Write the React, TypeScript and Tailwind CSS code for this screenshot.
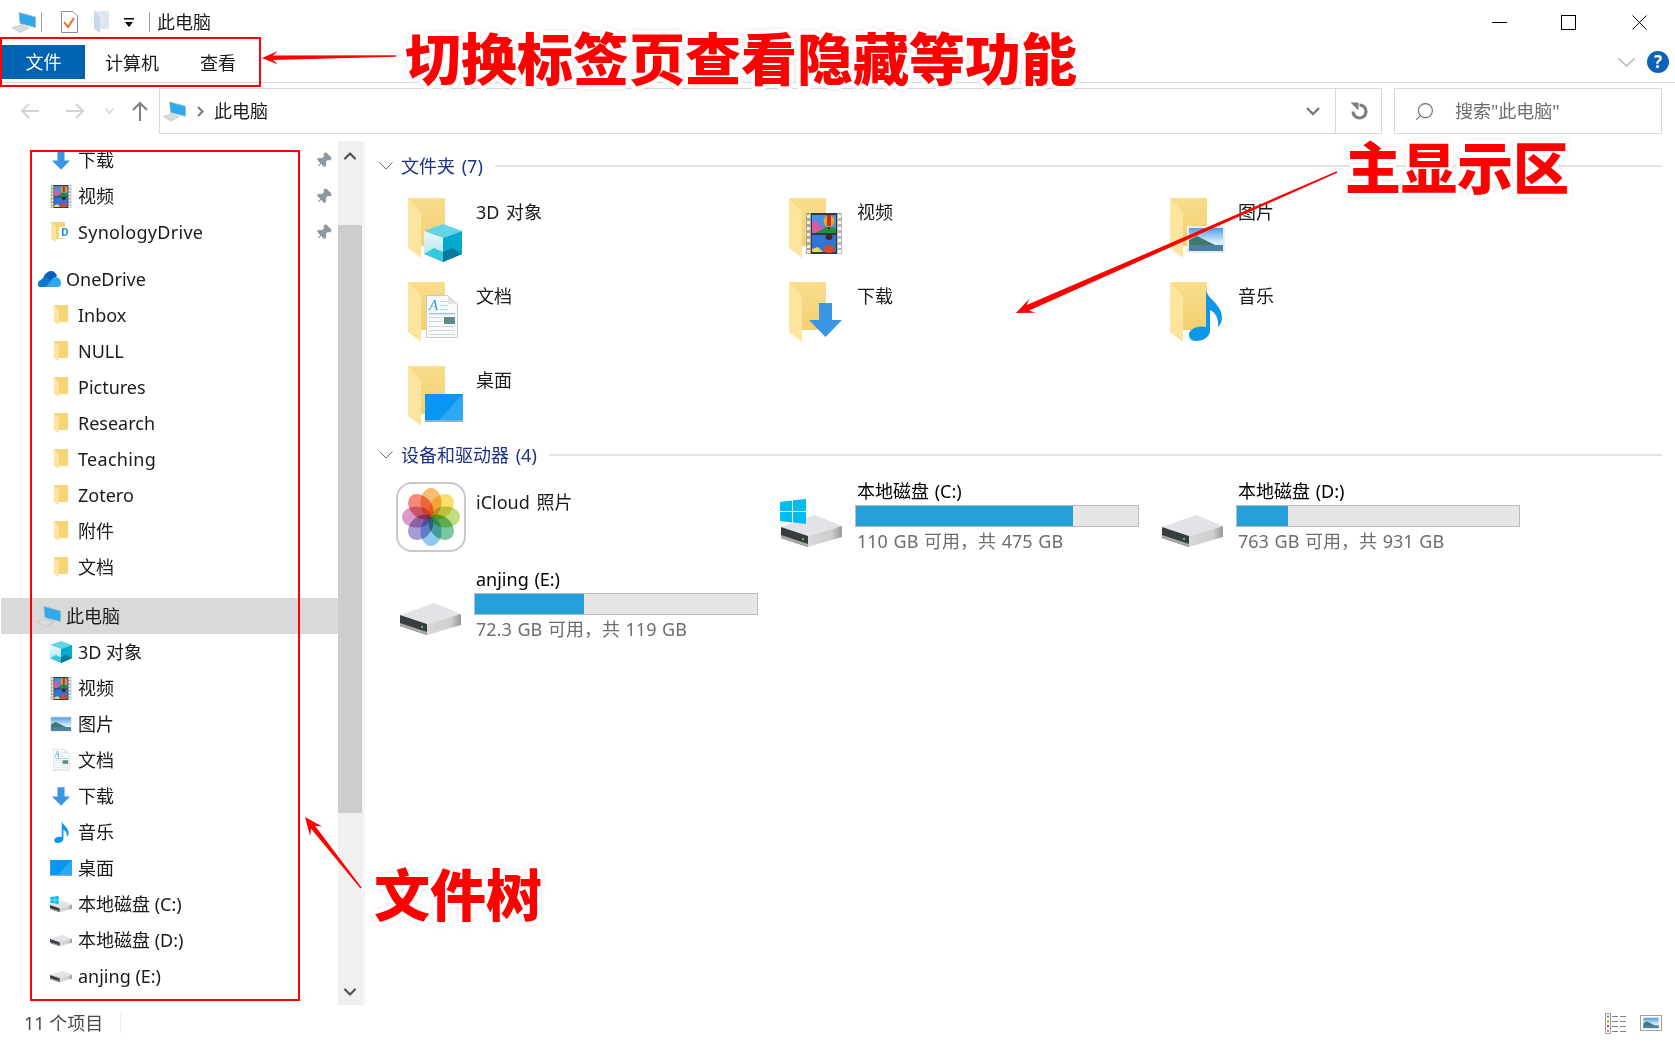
import React, { useId } from 'react';
import { ChevronDown, ChevronUp, Pin, Search } from 'lucide-react';

/* ---------- small drawn icons ---------- */

const Cube = ({ w = 38, h = 38 }: { w?: number; h?: number }) => {
  const id = useId();
  return (
    <svg width={w} height={h} viewBox="0 0 38 38">
      <defs>
        <linearGradient id={id} x1="0" y1="0" x2="0" y2="1">
          <stop offset="0" stopColor="#eaf8fa" />
          <stop offset="1" stopColor="#a9e3ea" />
        </linearGradient>
      </defs>
      <polygon points="19,0 38,7 19,14 0,7" fill="#62d4e6" />
      <polygon points="0,7 19,14 19,38 0,30" fill={`url(#${id})`} />
      <polygon points="38,7 19,14 19,38 38,30" fill="#04a9cf" />
      <polygon points="0,30 10,24 19,28 19,38" fill="#35c9d9" />
      <polygon points="38,30 28,24 19,28 19,38" fill="#03789c" />
    </svg>
  );
};

const Film = ({ w = 36, h = 41 }: { w?: number; h?: number }) => (
  <svg width={w} height={h} viewBox="0 0 36 41">
    <rect width="36" height="41" fill="#34393e" />
    <rect x="0" width="5" height="41" fill="#a9a998" />
    <rect x="31" width="5" height="41" fill="#b9b9b9" />
    {[2, 8, 14, 20, 26, 32, 37].map((y) => (
      <g key={y}>
        <rect x="1" y={y} width="3" height="3" fill="#f4f0d0" />
        <rect x="32" y={y} width="3" height="3" fill="#fff" />
      </g>
    ))}
    <rect x="6" y="2" width="24" height="18" fill="#4a90e2" />
    <polygon points="6,18 6,10 10,7 13,12 17,14 21,18 6,20" fill="#d85aa8" />
    <polygon points="10,20 20,14 30,15 30,20" fill="#1f8f3c" />
    <ellipse cx="23" cy="8" rx="5.5" ry="6" fill="#e8a820" />
    <rect x="21" y="2" width="4" height="11" fill="#c92a2a" />
    <rect x="22" y="14" width="2" height="2" fill="#3c2a20" />
    <rect x="6" y="22" width="24" height="17" fill="#2f74d8" />
    <polygon points="6,39 6,36 12,34 17,39" fill="#e7d55a" />
    <ellipse cx="23" cy="36" rx="5.5" ry="4" fill="#dd4a22" />
    <ellipse cx="23" cy="24" rx="3.5" ry="3" fill="#3c2a20" />
  </svg>
);

const Picture = ({ w = 38, h = 27 }: { w?: number; h?: number }) => {
  const id = useId();
  return (
    <svg width={w} height={h} viewBox="0 0 38 27">
      <defs>
        <linearGradient id={id} x1="0" y1="0" x2="0" y2="1">
          <stop offset="0" stopColor="#4e9de6" />
          <stop offset="0.6" stopColor="#d5ecf8" />
        </linearGradient>
      </defs>
      <rect width="38" height="27" fill="#e9ecec" />
      <rect x="2" y="2" width="34" height="23" fill={`url(#${id})`} />
      <polygon points="2,14 10,10 18,14 28,19 36,20 36,25 2,25" fill="#3f7a6a" />
      <rect x="2" y="19" width="34" height="6" fill="#4f80a8" />
    </svg>
  );
};

const Doc = ({ w = 32, h = 43 }: { w?: number; h?: number }) => (
  <svg width={w} height={h} viewBox="0 0 32 43">
    <polygon points="0.5,0.5 22,0.5 31.5,9 31.5,42.5 0.5,42.5" fill="#f7fafb" stroke="#c9c9c9" />
    <polygon points="22,0.5 22,9 31.5,9" fill="#dfe3e6" />
    <text x="3" y="15" fontSize="15" fontStyle="italic" fill="#3b9ae0" fontFamily="Liberation Serif, serif">A</text>
    {[6, 10, 14].map((y) => (
      <rect key={y} x="14" y={y} width="8" height="1" fill="#b7d8ef" />
    ))}
    <rect x="3" y="18" width="26" height="1.5" fill="#9cc8ea" />
    <rect x="18" y="22" width="11" height="7" fill="#5f8a88" />
    {[22, 26, 31, 35, 39].map((y, i) => (
      <rect key={y} x="3" y={y} width={i < 2 ? 13 : 26} height="1" fill="#cfd6da" />
    ))}
  </svg>
);

const DownArrow = ({ w = 33, h = 34 }: { w?: number; h?: number }) => (
  <svg width={w} height={h} viewBox="0 0 33 34">
    <polygon points="10,0 23,0 23,17 33,17 16.5,34 0,17 10,17" fill="#3a96e4" />
  </svg>
);

const Note = ({ w = 33, h = 51 }: { w?: number; h?: number }) => (
  <svg width={w} height={h} viewBox="0 0 33 51">
    <path
      d="M17 0 C19 10 33 14 33 28 C33 32 31 35 29 37 C30 28 26 22 21 20 L21 41 C21 47 14 51 7 51 C2 51 0 48 0 45 C0 39 8 35 17 37 Z"
      fill="#0d97ea"
    />
  </svg>
);

const Desktop = ({ w = 38, h = 28 }: { w?: number; h?: number }) => (
  <svg width={w} height={h} viewBox="0 0 38 28">
    <rect width="38" height="28" fill="#0796f2" />
    <polygon points="38,0 38,26 14,26" fill="#2ba8f8" />
    <rect y="26" width="38" height="2" fill="#8fb1c6" />
  </svg>
);

const BigFolder = ({ children }: { children?: React.ReactNode }) => {
  const id = useId();
  return (
    <div className="relative w-[60px] h-[62px]">
      <svg width="37" height="60" viewBox="0 0 37 60">
        <defs>
          <linearGradient id={id} x1="0" y1="0" x2="0" y2="1">
            <stop offset="0" stopColor="#f9dd8c" />
            <stop offset="1" stopColor="#f3cf70" />
          </linearGradient>
        </defs>
        <polygon points="0,0 37,0 37,48 13,48" fill={`url(#${id})`} />
        <polygon points="0,0 13,14 13,60 0,50" fill="#fde59e" />
      </svg>
      {children}
    </div>
  );
};

const SmallFolder = () => (
  <svg width="14" height="20" viewBox="0 0 14 20">
    <polygon points="0,0 14,0 14,17 5,17" fill="#f6d577" />
    <polygon points="0,0 5,5 5,20 0,17" fill="#fde59e" />
  </svg>
);

const PcIcon = ({ w = 24, h = 21 }: { w?: number; h?: number }) => (
  <svg width={w} height={h} viewBox="0 0 24 21">
    <polygon points="7,0.5 23.5,5 23.5,15.5 8,11.5" fill="#2fa9ee" stroke="#9fb5c2" strokeWidth="0.8" />
    <polygon points="0,15.5 9,13 17,16 8,20.5" fill="#d7dcdf" stroke="#b5b9bc" strokeWidth="0.6" />
  </svg>
);

const Drive = ({ w = 61, h = 32 }: { w?: number; h?: number }) => {
  const id = useId();
  return (
    <svg width={w} height={h} viewBox="0 0 61 32">
      <defs>
        <linearGradient id={id} x1="0" y1="0" x2="1" y2="0">
          <stop offset="0" stopColor="#d8d9db" />
          <stop offset="0.7" stopColor="#cfcfcf" />
          <stop offset="1" stopColor="#989898" />
        </linearGradient>
      </defs>
      <polygon points="0,12 34,0 61,11 27,21" fill="#e2e3e7" />
      <polygon points="27,21 61,11 61,22 27,32" fill={`url(#${id})`} />
      <polygon points="0,12 27,21 27,32 0,23" fill="#3a3d40" />
      <polygon points="0,20 27,29 27,32 0,23" fill="#a9a9a9" />
      <rect x="21" y="23" width="2" height="2" fill="#2fd24a" />
    </svg>
  );
};

const WinFlag = ({ w = 26, h = 25 }: { w?: number; h?: number }) => (
  <svg width={w} height={h} viewBox="0 0 26 25">
    <polygon points="0,3 12,1.4 12,12 0,12" fill="#00bcf2" />
    <polygon points="13,1.2 26,0 26,12 13,12" fill="#00bcf2" />
    <polygon points="0,13 12,13 12,23.4 0,22" fill="#00bcf2" />
    <polygon points="13,13 26,13 26,25 13,23.6" fill="#00bcf2" />
  </svg>
);

const OneDriveCloud = () => (
  <svg width="24" height="16" viewBox="0 0 24 16">
    <path d="M6 8 C7 3 11 0 14 0 C17 0 19 2 20 5 L12 12 Z" fill="#0a5fb4" />
    <path d="M3 16 C0 16 0 10 4 9 C6 6 10 6 12 8 L18 16 Z" fill="#0b78d4" />
    <path d="M9 16 L15 8 C17 5 24 6 24 12 C24 15 22 16 21 16 Z" fill="#2ea6ea" />
  </svg>
);

const Photos = () => {
  const petals = ['#f8a23c', '#f6d336', '#abd04f', '#46b37a', '#64b3ea', '#8578c6', '#c873b6', '#ef5a48'];
  return (
    <div className="w-[70px] h-[70px] rounded-[16px] border-2 border-[#c9c9c9] bg-white flex items-center justify-center">
      <svg width="60" height="60" viewBox="0 0 60 60">
        {petals.map((c, i) => (
          <ellipse
            key={c}
            cx="30"
            cy="15.5"
            rx="10.5"
            ry="14.5"
            fill={c}
            fillOpacity="0.72"
            transform={`rotate(${i * 45} 30 30)`}
            className="mix-blend-multiply"
          />
        ))}
      </svg>
    </div>
  );
};

/* ---------- data ---------- */

type NavRow = { label: string; icon: React.ReactNode; root?: boolean; pin?: boolean; gap?: string; active?: boolean; track?: boolean };

const smallDrive = <Drive w={22} h={13} />;

const navRows: NavRow[] = [
  { label: '下载', icon: <DownArrow w={18} h={19} />, pin: true },
  { label: '视频', icon: <Film w={22} h={23} />, pin: true },
  {
    label: 'SynologyDrive',
    pin: true,
    track: true,
    icon: (
      <div className="relative w-[20px] h-[20px]">
        <SmallFolder />
        <div className="absolute right-0 top-[5px] w-[12px] h-[11px] bg-white text-[10px] leading-[11px] text-center font-bold text-[#1d8fd8]">D</div>
      </div>
    ),
  },
  { label: 'OneDrive', icon: <OneDriveCloud />, root: true, gap: 'mt-[11px]' },
  { label: 'Inbox', icon: <SmallFolder /> },
  { label: 'NULL', icon: <SmallFolder /> },
  { label: 'Pictures', icon: <SmallFolder /> },
  { label: 'Research', icon: <SmallFolder /> },
  { label: 'Teaching', icon: <SmallFolder />, track: true },
  { label: 'Zotero', icon: <SmallFolder /> },
  { label: '附件', icon: <SmallFolder /> },
  { label: '文档', icon: <SmallFolder /> },
  { label: '此电脑', icon: <PcIcon />, root: true, gap: 'mt-[13px]', active: true },
  { label: '3D 对象', icon: <Cube w={22} h={22} /> },
  { label: '视频', icon: <Film w={22} h={23} /> },
  { label: '图片', icon: <Picture w={22} h={16} /> },
  { label: '文档', icon: <Doc w={17} h={22} /> },
  { label: '下载', icon: <DownArrow w={18} h={19} /> },
  { label: '音乐', icon: <Note w={17} h={22} /> },
  { label: '桌面', icon: <Desktop w={22} h={16} /> },
  {
    label: '本地磁盘 (C:)',
    icon: (
      <div className="relative w-[22px] h-[17px]">
        <div className="absolute bottom-0 left-0">{smallDrive}</div>
        <div className="absolute top-0 left-0">
          <WinFlag w={9} h={8} />
        </div>
      </div>
    ),
  },
  { label: '本地磁盘 (D:)', icon: smallDrive },
  { label: 'anjing (E:)', icon: smallDrive },
];

const folders: { label: string; overlay: React.ReactNode; left: string; top: string }[] = [
  { label: '3D 对象', overlay: <Cube />, left: 'left-[16px]', top: 'top-[26px]' },
  { label: '视频', overlay: <Film />, left: 'left-[17px]', top: 'top-[15px]' },
  { label: '图片', overlay: <Picture />, left: 'left-[17px]', top: 'top-[28px]' },
  { label: '文档', overlay: <Doc />, left: 'left-[18px]', top: 'top-[13px]' },
  { label: '下载', overlay: <DownArrow />, left: 'left-[20px]', top: 'top-[21px]' },
  { label: '音乐', overlay: <Note />, left: 'left-[19px]', top: 'top-[8px]' },
  { label: '桌面', overlay: <Desktop />, left: 'left-[17px]', top: 'top-[28px]' },
];

/* ---------- pieces ---------- */

const DriveTile = ({ name, free, pct, win }: { name: string; free: string; pct: string; win?: boolean }) => (
  <div className="h-[88px] flex">
    <div className="relative w-[79px] shrink-0">
      <div className="absolute left-[5px] top-[45px]">
        <Drive />
      </div>
      {win && (
        <div className="absolute left-[4px] top-[29px]">
          <WinFlag />
        </div>
      )}
    </div>
    <div className="w-[284px] pt-[8px]">
      <div className="h-[26px] leading-[26px] pl-[2px] text-black [word-spacing:1px]">{name}</div>
      <div className="mt-[1px] h-[22px] border border-[#bcbcbc] bg-[#e6e6e6]">
        <div className={`h-full bg-[#26a0da] ${pct}`} />
      </div>
      <div className="h-[26px] leading-[26px] mt-[1px] pl-[2px] text-[#6d6d6d] [word-spacing:1px]">{free}</div>
    </div>
  </div>
);

const SectionHeader = ({ label }: { label: string }) => (
  <div className="h-[28px] flex items-center">
    <svg width="14" height="8" viewBox="0 0 14 8" className="ml-[14px] shrink-0">
      <polyline points="0.5,0.5 7,7 13.5,0.5" fill="none" stroke="#6d6d6d" />
    </svg>
    <span className="ml-[8px] text-[#1e3287] whitespace-nowrap [word-spacing:2px]">{label}</span>
    <div className="ml-[12px] flex-1 h-[2px] bg-[#e5e5e5] mr-[13px]" />
  </div>
);

const RedArrow = ({ x1, y1, x2, y2, w = 5, head = 14 }: { x1: number; y1: number; x2: number; y2: number; w?: number; head?: number }) => {
  // tapered line from tail (x1,y1) to tip (x2,y2) with a swept head
  const len = Math.hypot(x2 - x1, y2 - y1);
  const ux = (x2 - x1) / len;
  const uy = (y2 - y1) / len;
  const nx = -uy;
  const ny = ux;
  const p = (along: number, side: number) => `${x1 + ux * along + nx * side},${y1 + uy * along + ny * side}`;
  const points = [
    p(0, 0.7),
    p(len - head + 3, w / 2),
    p(len - head - 2, head * 0.48),
    p(len, 0),
    p(len - head - 2, -head * 0.48),
    p(len - head + 3, -w / 2),
    p(0, -0.7),
  ].join(' ');
  return <polygon points={points} fill="#ff0000" />;
};

const bigText =
  "absolute font-black text-[56px] leading-[64px] text-[#ff0000] whitespace-nowrap [font-family:'Noto_Sans_CJK_SC',sans-serif] [text-shadow:4px_0_0_#fff,-4px_0_0_#fff,0_4px_0_#fff,0_-4px_0_#fff,3px_3px_0_#fff,-3px_3px_0_#fff,3px_-3px_0_#fff,-3px_-3px_0_#fff,0_0_7px_#8a8a8a]";

export default function App() {
  return (
    <div className="relative w-[1675px] h-[1041px] overflow-hidden bg-white text-[18px] text-[#1a1a1a] [font-family:'Noto_Sans','Noto_Sans_CJK_SC',sans-serif]">
      {/* title bar */}
      <div className="h-[38px] pt-[6px] flex items-center relative">
        <div className="ml-[12px]">
          <PcIcon w={24} h={21} />
        </div>
        <div className="ml-[5px] w-px h-[20px] bg-[#a0a0a0]" />
        <svg width="17" height="22" viewBox="0 0 17 22" className="ml-[19px]">
          <polygon points="0.5,0.5 12,0.5 16.5,5 16.5,21.5 0.5,21.5" fill="#fff" stroke="#8e8e8e" />
          <polyline points="3,11 7,16 13,7" fill="none" stroke="#ec6a25" strokeWidth="2" />
        </svg>
        <svg width="15" height="22" viewBox="0 0 15 22" className="ml-[16px]">
          <polygon points="0,0 15,0 15,18 6,18" fill="#dce7f3" />
          <polygon points="0,0 6,6 6,22 0,18" fill="#c9d9ec" />
        </svg>
        <svg width="10" height="9" viewBox="0 0 10 9" className="ml-[15px]">
          <rect width="10" height="1.5" fill="#000" />
          <polygon points="1,4 9,4 5,9" fill="#000" />
        </svg>
        <div className="ml-[15px] w-px h-[20px] bg-[#a0a0a0]" />
        <span className="ml-[7px]">此电脑</span>
        <div className="ml-auto flex items-center">
          <svg width="15" height="15" viewBox="0 0 15 15" className="mr-[54px]">
            <line x1="0" y1="7.5" x2="15" y2="7.5" stroke="#000" />
          </svg>
          <svg width="15" height="15" viewBox="0 0 15 15" className="mr-[56px]">
            <rect x="0.5" y="0.5" width="14" height="14" fill="none" stroke="#000" />
          </svg>
          <svg width="15" height="15" viewBox="0 0 15 15" className="mr-[28px]">
            <path d="M0.5 0.5 L14.5 14.5 M14.5 0.5 L0.5 14.5" stroke="#000" />
          </svg>
        </div>
      </div>

      {/* ribbon tabs */}
      <div className="h-[45px] border-b border-[#dcdcdc] flex items-start pt-[7px]">
        <div className="ml-[2px] w-[83px] h-[34px] bg-[#0063b1] text-white flex items-center justify-center">文件</div>
        <div className="ml-[20px] h-[34px] leading-[34px] pt-px">计算机</div>
        <div className="ml-[41px] h-[34px] leading-[34px] pt-px">查看</div>
        <div className="ml-auto flex items-center h-[34px] pr-[6px]">
          <svg width="17" height="9" viewBox="0 0 17 9" className="mr-[12px]">
            <polyline points="0.5,0.5 8.5,8 16.5,0.5" fill="none" stroke="#b4b4b4" strokeWidth="1.5" />
          </svg>
          <div className="w-[22px] h-[22px] rounded-full bg-[#0b62b8] text-white text-[17px] leading-[22px] font-bold text-center">?</div>
        </div>
      </div>

      {/* address row */}
      <div className="h-[58px] pt-[5px] flex items-start">
        <div className="w-[159px] h-[45px] flex items-center relative shrink-0">
          <svg width="19" height="16" viewBox="0 0 19 16" className="ml-[20px]">
            <path d="M19 8 H2 M9 1 L2 8 L9 15" fill="none" stroke="#d4d4d4" strokeWidth="2" />
          </svg>
          <svg width="19" height="16" viewBox="0 0 19 16" className="ml-[27px]">
            <path d="M0 8 H17 M10 1 L17 8 L10 15" fill="none" stroke="#d4d4d4" strokeWidth="2" />
          </svg>
          <svg width="9" height="6" viewBox="0 0 9 6" className="ml-[20px]">
            <polyline points="0.5,0.5 4.5,5 8.5,0.5" fill="none" stroke="#d4d4d4" strokeWidth="1.5" />
          </svg>
          <svg width="16" height="20" viewBox="0 0 16 20" className="ml-[18px]">
            <path d="M8 20 V2 M1 9 L8 2 L15 9" fill="none" stroke="#808080" strokeWidth="2" />
          </svg>
        </div>
        <div className="w-[1223px] h-[46px] border border-[#d9d9d9] flex items-center shrink-0">
          <div className="ml-[3px]">
            <PcIcon w={23} h={21} />
          </div>
          <svg width="7" height="11" viewBox="0 0 7 11" className="ml-[11px]">
            <polyline points="1,1 5.5,5.5 1,10" fill="none" stroke="#7a7a7a" strokeWidth="2" />
          </svg>
          <span className="ml-[10px]">此电脑</span>
          <svg width="14" height="9" viewBox="0 0 14 9" className="ml-auto mr-[15px]">
            <polyline points="1,1 7,7 13,1" fill="none" stroke="#7a7a7a" strokeWidth="2.4" />
          </svg>
          <div className="w-[46px] h-full border-l border-[#d9d9d9] flex items-center justify-center">
            <svg width="18" height="18" viewBox="0 0 18 18">
              <path d="M9.5 3 A6.5 6.5 0 1 1 3 9.5" fill="none" stroke="#7f7f7f" strokeWidth="3.2" />
              <polygon points="0.5,0.5 8.5,0.5 8.5,8.5" fill="#7f7f7f" />
            </svg>
          </div>
        </div>
        <div className="ml-[12px] w-[268px] h-[46px] border border-[#d9d9d9] flex items-center shrink-0">
          <Search size={21} strokeWidth={1.2} className="ml-[19px] text-[#6d6d6d] -scale-x-100" />
          <span className="ml-[20px] text-[#6d6d6d]">搜索"此电脑"</span>
        </div>
      </div>

      {/* body */}
      <div className="h-[864px] flex">
        <div className="w-[338px] shrink-0 pt-[1px] overflow-hidden">
          {navRows.map((r, i) => (
            <div
              key={i}
              className={`h-[36px] flex items-center ${r.gap ?? ''} ${r.active ? 'bg-[#d9d9d9] ml-px' : ''} ${r.root ? (r.active ? 'pl-[36px]' : 'pl-[37px]') : 'pl-[50px]'}`}
            >
              <div className={`flex items-center justify-center shrink-0 ${r.root ? 'w-[24px]' : 'w-[22px]'}`}>{r.icon}</div>
              <span className={`whitespace-nowrap ${r.root ? 'ml-[5px]' : 'ml-[6px]'} ${r.track ? 'tracking-[0.3px]' : ''}`}>{r.label}</span>
              {r.pin && <Pin size={17} fill="#8e98a0" strokeWidth={1.5} className="ml-auto mr-[6px] text-[#8e98a0] rotate-45" />}
            </div>
          ))}
        </div>

        <div className="w-[24px] shrink-0 bg-[#f0f0f0] flex flex-col">
          <div className="h-[84px] flex justify-center pt-[5px]">
            <ChevronUp size={20} strokeWidth={2.6} className="text-[#505050]" />
          </div>
          <div className="h-[588px] bg-[#cdcdcd]" />
          <div className="flex-1 flex items-end justify-center pb-[3px]">
            <ChevronDown size={20} strokeWidth={2.6} className="text-[#505050]" />
          </div>
        </div>

        <div className="flex-1 border-l-[3px] border-[#f5f5f5] pt-[11px]">
          <SectionHeader label="文件夹 (7)" />
          <div className="h-[261px] pl-[30px] pt-[10px] grid grid-cols-[381px_381px_381px] auto-rows-[84px]">
            {folders.map((f) => (
              <div key={f.label} className="flex pl-[13px]">
                <div className="pt-[8px] w-[68px] shrink-0">
                  <BigFolder>
                    <div className={`absolute ${f.left} ${f.top}`}>{f.overlay}</div>
                  </BigFolder>
                </div>
                <span className="pt-[9px] leading-[26px] [word-spacing:2px]">{f.label}</span>
              </div>
            ))}
          </div>
          <SectionHeader label="设备和驱动器 (4)" />
          <div className="pl-[30px] pt-[1px] grid grid-cols-[381px_381px_381px] auto-rows-[88px]">
            <div className="flex">
              <div className="w-[81px] pt-[12px] pl-[1px] shrink-0">
                <Photos />
              </div>
              <span className="pt-[19px] leading-[26px] [word-spacing:2px]">iCloud 照片</span>
            </div>
            <DriveTile name="本地磁盘 (C:)" free="110 GB 可用，共 475 GB" pct="w-[77%]" win />
            <DriveTile name="本地磁盘 (D:)" free="763 GB 可用，共 931 GB" pct="w-[18%]" />
            <DriveTile name="anjing (E:)" free="72.3 GB 可用，共 119 GB" pct="w-[38.5%]" />
          </div>
        </div>
      </div>

      {/* status bar */}
      <div className="h-[36px] flex items-center text-[#4a4a4a]">
        <span className="ml-[24px]">11 个项目</span>
        <div className="ml-[17px] w-px h-[20px] bg-[#ececec]" />
        <svg width="22" height="21" viewBox="0 0 22 21" className="ml-auto">
          <rect x="0.5" y="0.5" width="5" height="20" fill="#fff" stroke="#a0a0a0" />
          <rect x="2" y="2.5" width="2" height="2" fill="#3a8a9a" />
          <rect x="2" y="7.5" width="2" height="2" fill="#a8a020" />
          <rect x="2" y="12" width="2" height="2" fill="#b04a20" />
          <rect x="2" y="17" width="2" height="2" fill="#8aa0a0" />
          {[3, 8, 13, 18].map((y) => (
            <g key={y}>
              <rect x="7" y={y} width="6" height="1" fill="#808080" />
              <rect x="15" y={y} width="6" height="1" fill="#808080" />
            </g>
          ))}
        </svg>
        <div className="ml-[13px] mr-[13px] w-[22px] h-[16px] border border-[#a0a0a0] p-px">
          <Picture w={18} h={12} />
        </div>
      </div>

      {/* annotations laid over the window */}
      <div className="absolute left-0 top-[37px] w-[261px] h-[50px] border-2 border-[#ff0000]" />
      <div className="absolute left-[30px] top-[150px] w-[270px] h-[851px] border-2 border-[#ff0000]" />
      <svg width="1675" height="1041" viewBox="0 0 1675 1041" className="absolute inset-0 pointer-events-none">
        <RedArrow x1={396} y1={56} x2={262} y2={58} w={4.5} head={14} />
        <RedArrow x1={1337} y1={172} x2={1016} y2={313} w={6} head={16} />
        <RedArrow x1={361} y1={888} x2={305} y2={817} w={5} head={16} />
      </svg>
      <div className={`${bigText} left-[405px] top-[24px]`}>切换标签页查看隐藏等功能</div>
      <div className={`${bigText} left-[1345px] top-[133px]`}>主显示区</div>
      <div className={`${bigText} left-[374px] top-[860px]`}>文件树</div>
    </div>
  );
}
